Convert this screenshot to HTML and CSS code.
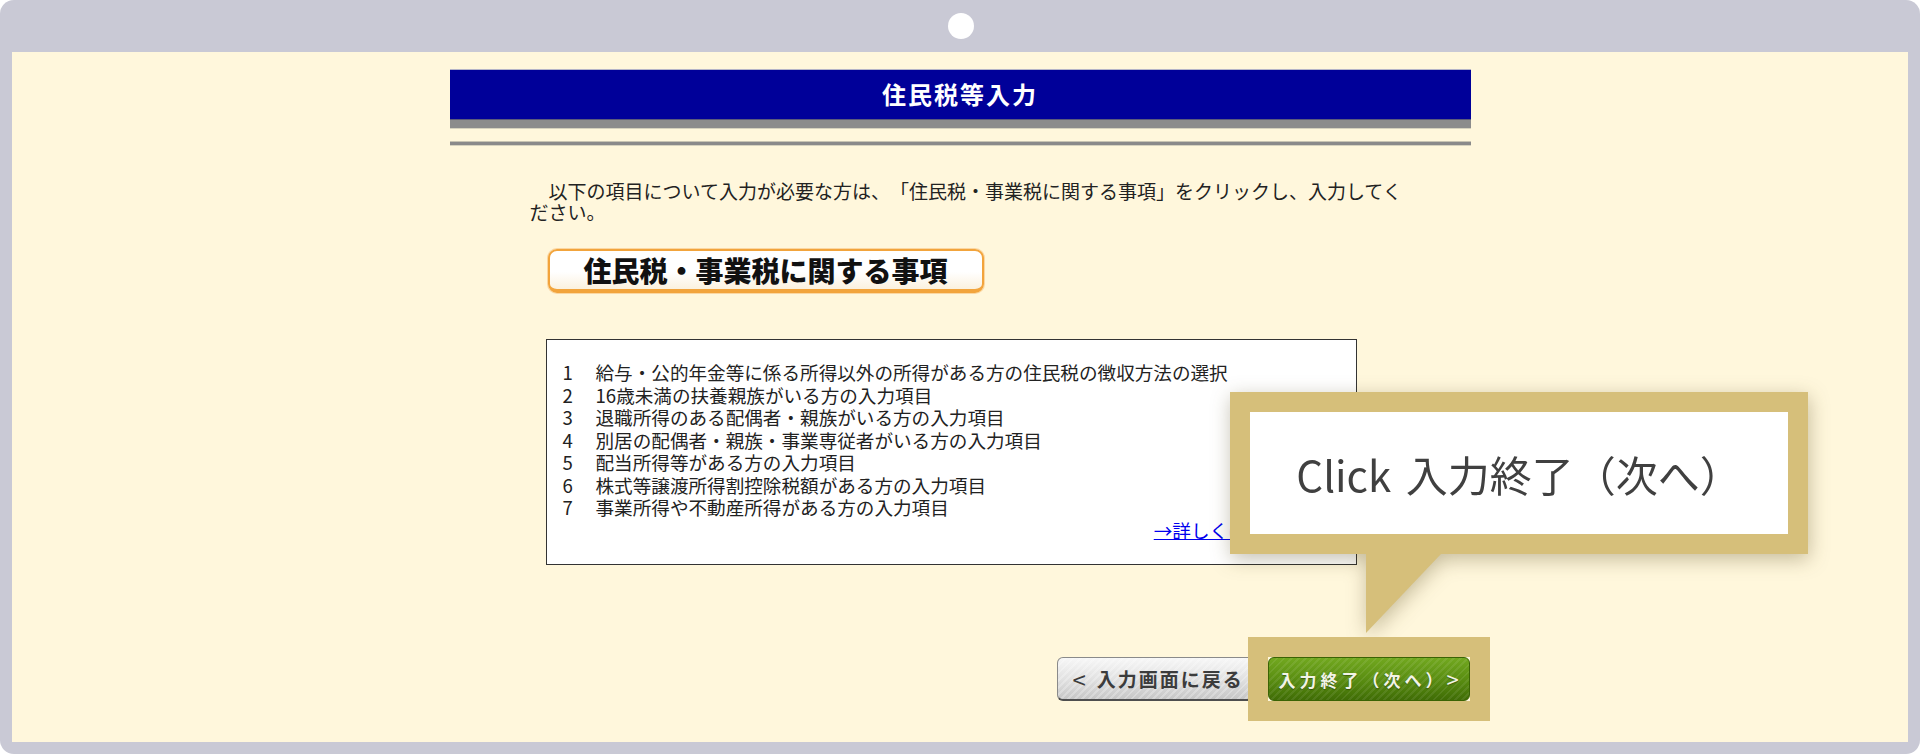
FILE: index.html
```html
<!DOCTYPE html>
<html lang="ja">
<head>
  <meta charset="UTF-8">
  <meta name="viewport" content="width=device-width, initial-scale=1.0">
  <title>住民税等入力</title>
  <link rel="stylesheet" href="styles.css">
</head>
<body>
  <div class="device">
    <div class="bezel"><span class="camera"></span></div>
    <div class="screen">
      <div class="page">
        <div class="title-bar">住民税等入力</div>
        <div class="title-shade"></div>
        <div class="rule"></div>

        <p class="lead">　以下の項目について入力が必要な方は、「住民税・事業税に関する事項」をクリックし、入力してください。</p>

        <button class="topic-btn">住民税・事業税に関する事項</button>

        <div class="info-box">
          <ol class="items">
            <li><span class="num">1</span>給与・公的年金等に係る所得以外の所得がある方の住民税の徴収方法の選択</li>
            <li><span class="num">2</span>16歳未満の扶養親族がいる方の入力項目</li>
            <li><span class="num">3</span>退職所得のある配偶者・親族がいる方の入力項目</li>
            <li><span class="num">4</span>別居の配偶者・親族・事業専従者がいる方の入力項目</li>
            <li><span class="num">5</span>配当所得等がある方の入力項目</li>
            <li><span class="num">6</span>株式等譲渡所得割控除税額がある方の入力項目</li>
            <li><span class="num">7</span>事業所得や不動産所得がある方の入力項目</li>
          </ol>
          <div class="more"><a href="#">→詳しくはこちら</a></div>
        </div>

        <div class="nav">
          <button class="btn-back"><span class="chev">&lt;</span>入力画面に戻る</button>
          <span class="highlight"><button class="btn-next">入力終了（次へ）<span class="chev-next">&gt;</span></button></span>
        </div>
      </div>

      <div class="callout">
        <div class="callout-body">Click 入力終了（次へ）</div>
      </div>
    </div>
  </div>
</body>
</html>
```

FILE: styles.css
```css
html, body { margin: 0; }
body { background: #fff; font-family: "Noto Sans CJK JP", "Noto Sans", sans-serif; text-spacing-trim: space-all; }

.device { width: 1920px; height: 754px; box-sizing: border-box; background: #c9c9d5; border-radius: 14px; padding: 0 12px 12px; display: flex; flex-direction: column; }
.bezel { height: 52px; display: flex; align-items: center; justify-content: center; }
.camera { width: 26px; height: 26px; border-radius: 50%; background: #fff; margin-left: 2px; }
.screen { flex: 1; background: #fff7dc; position: relative; }

.page { width: 1021px; margin: 0 auto; padding-top: 17px; }
.title-bar { height: 49px; line-height: 47px; border-top: 1px solid #b4b4c8; background: #000099; color: #fff; font-size: 24px; font-weight: 700; letter-spacing: 2px; text-align: center; }
.title-shade { height: 8px; background: #8c8c8c; border-top: 1px solid #5a5a7a; border-bottom: 1px solid #d6d2be; }
.rule { height: 3px; margin-top: 12px; background: #8a8a8a; border-top: 1px solid #c8c4b2; border-bottom: 1px solid #d6d2be; }

.lead { width: 878px; margin: 34px 0 0 80px; font-size: 19px; line-height: 21px; color: #222; }

.topic-btn { display: block; box-sizing: border-box; width: 436px; height: 44px; margin: 27px 0 0 98px; padding: 0; border: 2px solid #f2a43c; border-bottom-width: 4px; border-radius: 9px; background: linear-gradient(#ffffff, #ffffff 55%, #fbf1de); box-shadow: 0 0 0 1px #fbd7a2; font-family: inherit; font-size: 28px; font-weight: 900; color: #111; line-height: 36px; text-align: center; white-space: nowrap; }

.info-box { box-sizing: border-box; width: 811px; height: 226px; margin: 46px 0 0 96px; padding: 21px 16px 20px; border: 1px solid #333; background: #fff; }
.items { list-style: none; margin: 0; padding: 0; font-size: 18.6px; line-height: 22.5px; color: #222; }
.items li { display: flex; }
.num { width: 33px; flex: none; }
.more { text-align: right; padding-right: 37px; font-size: 18.6px; line-height: 22.5px; }
.more a { color: #0000ee; }

.nav { display: flex; justify-content: flex-end; gap: 10px; margin-top: 92px; padding-right: 1px; }
.btn-back, .btn-next { box-sizing: border-box; height: 44px; padding: 0; border-radius: 6px; font-family: inherit; font-weight: 700; cursor: pointer; }
.btn-back { width: 200px; padding-left: 15px; text-align: left; border: 1px solid #8a8a8a; border-bottom: 2px solid #4e4e4e; color: #3c3c3c; font-size: 19px; letter-spacing: 2px; white-space: nowrap; overflow: hidden;
  background: repeating-linear-gradient(135deg, rgba(255,255,255,0.25) 0 2px, rgba(255,255,255,0) 2px 5px), linear-gradient(#f7f7f7, #e2e2e2 50%, #c6c6c6); }
.chev { margin-right: 9px; font-size: 24px; font-weight: 400; line-height: 1; vertical-align: -2px; }
.highlight { position: relative; z-index: 1; display: block; background: #fff7dc; box-shadow: 0 0 0 20px #d6bf7a; margin-left: 1px; }
.btn-next { display: block; width: 202px; border: 1px solid #3a6304; color: #f2f4e6; font-size: 17px; letter-spacing: 4px; text-align: center; white-space: nowrap; text-shadow: 0 1px 1px rgba(0,0,0,0.35);
  background: repeating-linear-gradient(135deg, rgba(255,255,255,0.08) 0 2px, rgba(255,255,255,0) 2px 5px), linear-gradient(#72a81f, #5a8e12 50%, #3f6c05); }
.chev-next { font-size: 22px; font-weight: 400; line-height: 1; vertical-align: -1px; letter-spacing: 0; }

.callout { position: absolute; left: 1218px; top: 340px; width: 578px; filter: drop-shadow(1px 5px 10px rgba(60, 45, 0, 0.3)); }
.callout-body { box-sizing: border-box; height: 162px; border: 20px solid #d6bf7a; background: #fff; display: flex; align-items: center; justify-content: center; font-size: 42px; word-spacing: 5px; color: #404040; }
.callout::after { content: ""; display: block; width: 75px; height: 79px; margin-left: 136px; background: #d6bf7a; clip-path: polygon(0 0, 100% 0, 0 100%); }
```
